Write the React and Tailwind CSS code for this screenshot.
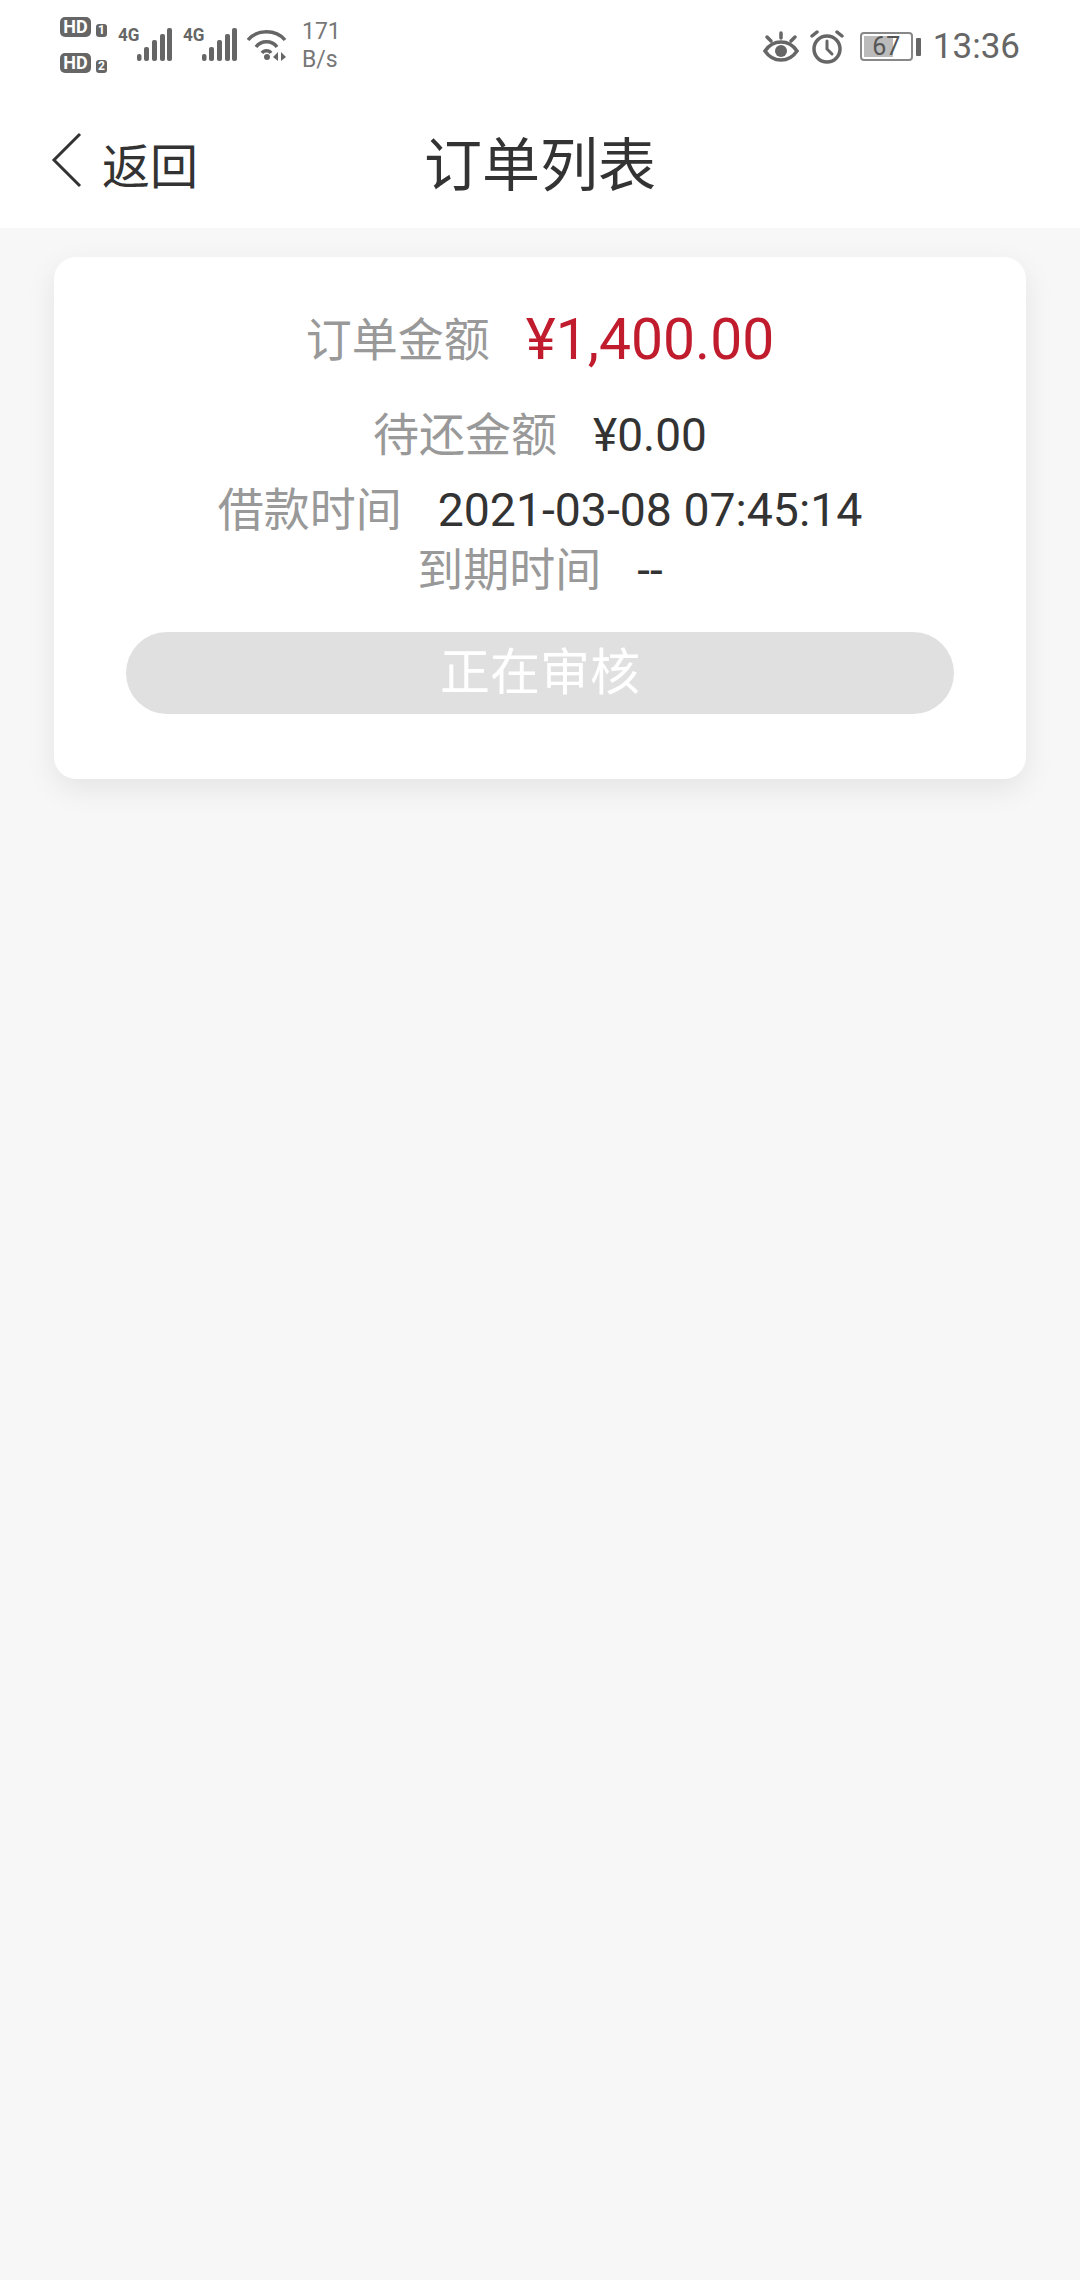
import React from "react";

const CJK = "font-['Roboto','Noto_Sans_CJK_SC',sans-serif]";

function Hd({ n }) {
  return (
    <div className="flex items-end gap-[5px] h-[20px]">
      <span className="w-[31px] h-[20px] rounded-[5px] bg-[#666] text-white text-[18px] leading-[20px] font-bold text-center font-['Roboto',sans-serif]">HD</span>
      <span className="w-[11px] h-[13px] rounded-[3px] bg-[#666] text-white text-[12px] leading-[13px] font-bold text-center font-['Roboto',sans-serif]">{n}</span>
    </div>
  );
}

function Signal() {
  return (
    <div className="relative w-[55px] h-[40px]">
      <span className="absolute left-0 top-[4px] text-[#666] text-[18px] leading-[18px] font-bold font-['Roboto',sans-serif] scale-x-[0.95] origin-left">4G</span>
      <svg className="absolute left-0 top-0" width="55" height="40" viewBox="0 0 55 40" fill="#666">
        <rect x="19" y="32" width="4.5" height="7" rx="2" />
        <rect x="26" y="25" width="5" height="14" rx="2" />
        <rect x="34" y="18" width="5" height="21" rx="2" />
        <rect x="42" y="12" width="5" height="27" rx="2" />
        <rect x="49" y="6" width="5" height="33" rx="2" />
      </svg>
    </div>
  );
}

function Wifi() {
  return (
    <svg width="40" height="34" viewBox="0 0 40 34" fill="none" stroke="#666" strokeWidth="3.5">
      <path d="M1 12 C10 1 29 1 38 12" />
      <path d="M9 19 C14 12 25 12 30 19" />
      <path d="M15 25 C17 22 22 22 24 25" />
      <circle cx="20" cy="29" r="3" fill="#666" stroke="none" />
      <path d="M31 24 L26 29 L31 33 Z M34 24 L39 29 L34 33 Z" fill="#666" stroke="none" />
    </svg>
  );
}

function Eye() {
  return (
    <svg width="36" height="32" viewBox="0 0 36 32" fill="none" stroke="#666" strokeWidth="3.5" strokeLinecap="round">
      <path d="M2 20 C10 8 26 8 34 20 C26 32 10 32 2 20 Z" />
      <circle cx="18" cy="20" r="6" fill="#666" stroke="none" />
      <path d="M18 2 V7 M4 6 L8 10 M32 6 L28 10" />
    </svg>
  );
}

function Alarm() {
  return (
    <svg width="34" height="34" viewBox="0 0 34 34" fill="none" stroke="#666" strokeWidth="3.5" strokeLinecap="round">
      <circle cx="17" cy="19" r="13" />
      <path d="M17 11 V19 L22 24" strokeWidth="3" />
      <path d="M2 6 L7 2 M32 6 L27 2" />
    </svg>
  );
}

function Row({ label, value, className = "", valueClass = "" }) {
  return (
    <div className={`flex justify-center items-center ${className}`}>
      <span className="text-[#999] text-[46px] leading-[62px]">{label}</span>
      <span className={`ml-[36px] leading-[62px] ${valueClass}`}>{value}</span>
    </div>
  );
}

export default function App() {
  return (
    <div className={`w-[1080px] h-[2280px] bg-[#f7f7f7] ${CJK}`}>
      {/* status bar */}
      <div className="h-[90px] bg-white flex justify-between pl-[60px] pr-[60px]">
        <div className="flex items-start pt-[15px]">
          <div className="flex flex-col gap-[16px] pt-[2px] w-[47px]">
            <Hd n="1" />
            <Hd n="2" />
          </div>
          <div className="flex ml-[11px] mt-[7px] gap-[10px]">
            <Signal />
            <Signal />
          </div>
          <div className="ml-[9px] mt-[13px]"><Wifi /></div>
          <div className="ml-[15px] mt-[3px] text-[#777] text-[23px] leading-[28px] font-['Roboto',sans-serif]">
            <div>171</div>
            <div>B/s</div>
          </div>
        </div>
        <div className="flex items-center h-[90px] pt-[3px]">
          <Eye />
          <div className="ml-[11px]"><Alarm /></div>
          <div className="ml-[16px] relative w-[53px] h-[29px] border-2 border-[#888] rounded-[4px] p-[2px]">
            <div className="h-full w-[65%] bg-[#bbb]" />
            <span className="absolute inset-0 text-center text-[#555] text-[25px] leading-[25px] font-['Roboto',sans-serif]">67</span>
          </div>
          <div className="ml-[3px] w-[5px] h-[18px] rounded-[1px] bg-[#666]" />
          <div className="ml-[12px] text-[#666] text-[35px] leading-[40px] font-['Roboto',sans-serif]">13:36</div>
        </div>
      </div>

      {/* nav bar */}
      <div className="relative h-[138px] bg-white flex items-center justify-center">
        <div className="absolute left-[50px] top-[42px] flex items-end">
          <svg width="32" height="56" viewBox="0 0 32 56" fill="none" stroke="#333" strokeWidth="3">
            <path d="M30 2 L4 28 L30 54" />
          </svg>
          <span className="ml-[20px] mb-[-8px] text-[#333] text-[48px] leading-[56px]">返回</span>
        </div>
        <span className="text-[#333] text-[58px] leading-[70px] mt-[13px]">订单列表</span>
      </div>

      {/* order card */}
      <div className="mx-[54px] mt-[29px] h-[522px] bg-white rounded-[22px] shadow-[0_10px_30px_rgba(0,0,0,0.08)] pt-[48px] px-[72px]">
        <Row label="订单金额" value="¥1,400.00" valueClass="text-[57px] text-[#c01c2e]" className="h-[70px]" />
        <Row label="待还金额" value="¥0.00" valueClass="text-[46px] text-[#333]" className="mt-[29px]" />
        <Row label="借款时间" value="2021-03-08 07:45:14" valueClass="text-[46.4px] text-[#333]" className="mt-[13px]" />
        <Row label="到期时间" value="--" valueClass="text-[46px] text-[#333]" className="mt-[-2px]" />
        <button className="mt-[31px] w-full h-[82px] rounded-full bg-[#e0e0e0] text-white text-[50px] leading-[82px]">正在审核</button>
      </div>
    </div>
  );
}
